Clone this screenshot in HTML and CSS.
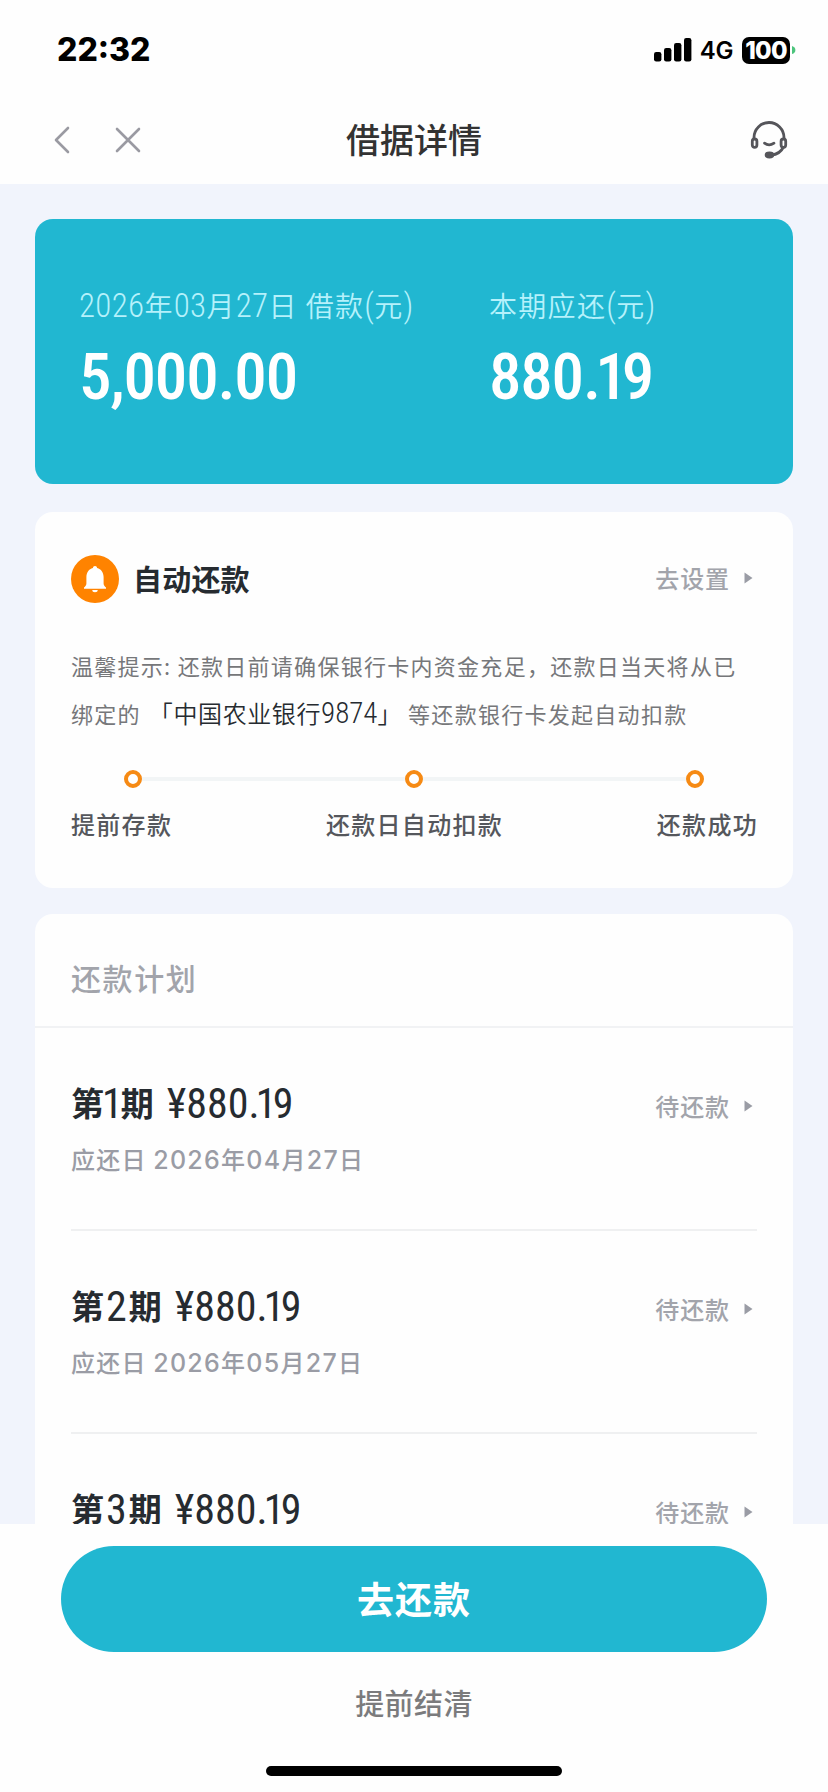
FILE: index.html
```html
<!DOCTYPE html>
<html lang="zh-CN">
<head>
<meta charset="utf-8">
<title>借据详情</title>
<link rel="stylesheet" href="styles.css">
</head>
<body>
<div class="page">
  <header class="top">
    <div class="status">
      <span class="time">22:32</span>
      <div class="status-right">
        <svg class="signal" width="38" height="24" viewBox="0 0 38 24"><rect x="0" y="14" width="7.4" height="9.5" rx="2.2"/><rect x="10" y="10" width="7.4" height="13.5" rx="2.2"/><rect x="20" y="5" width="7.4" height="18.5" rx="2.2"/><rect x="30" y="0" width="7.4" height="23.5" rx="2.2"/></svg>
        <span class="net">4G</span>
        <span class="battery">100</span>
        <svg class="cap" width="4" height="8" viewBox="0 0 4 8"><path d="M0 0Q3.4 1 3.4 4T0 8Z"/></svg>
      </div>
    </div>
    <nav class="nav">
      <div class="nav-left">
        <svg width="18" height="28" viewBox="0 0 18 28"><path d="M15 2 3 14 15 26"/></svg>
        <svg width="26" height="26" viewBox="0 0 26 26"><path d="M2 2 24 24M24 2 2 24"/></svg>
      </div>
      <h1 class="nav-title">借据详情</h1>
      <svg class="service" width="38" height="38" viewBox="0 0 38 38"><path d="M4 18v-1.5a15 15 0 0 1 30 0V18"/><rect x="2.3" y="18" width="4.6" height="8.4" rx="2.3"/><rect x="31.1" y="18" width="4.6" height="8.4" rx="2.3"/><path d="M33.500 26c-2.500 5-7 7.600-12 8"/><path d="M14.500 22.200q4.500 3.400 9.500 0" stroke-linecap="round"/><ellipse cx="19.500" cy="34" rx="3.400" ry="2" fill="#55555a"/></svg>
    </nav>
  </header>

  <main class="content">
    <section class="summary">
      <div class="summary-main">
        <div class="label"><b class="n">2026</b>年<b class="n">03</b>月<b class="n">27</b>日<i class="gap"></i>借款<b class="n">(</b>元<b class="n">)</b></div>
        <div class="amount">5,000.00</div>
      </div>
      <div>
        <div class="label">本期应还<b class="n">(</b>元<b class="n">)</b></div>
        <div class="amount tight">880<span class="frac">.19</span></div>
      </div>
    </section>

    <section class="card auto">
      <div class="auto-head">
        <svg class="bell" width="48" height="48" viewBox="0 0 48 48"><circle cx="24" cy="24" r="24" fill="#ff8300"/><path d="M24 11c1.200 0 2 .8 2.100 1.900 4 1 6.500 4.500 6.500 9.100v6.500c0 1.800 1.200 2.800 2.400 4.100v1.200H13v-1.200c1.200-1.300 2.400-2.300 2.400-4.100V22c0-4.600 2.500-8.100 6.500-9.100.1-1.100.9-1.900 2.100-1.900ZM21.300 35h5.400a2.700 2.200 0 0 1-5.400 0Z" fill="#fff"/></svg>
        <h2 class="auto-title">自动还款</h2>
        <a class="more">去设置<svg width="9" height="12" viewBox="0 0 9 12"><path d="M.5.500 8.500 6 .5 11.500Z"/></svg></a>
      </div>
      <p class="tip">温馨提示: 还款日前请确保银行卡内资金充足，还款日当天将从已<br>绑定的<span class="bank">「中国农业银行<b class="bank-n">9874</b>」</span>等还款银行卡发起自动扣款</p>
      <div class="track"><i class="dot"></i><i class="bar"></i><i class="dot"></i><i class="bar"></i><i class="dot"></i></div>
      <div class="steps"><span>提前存款</span><span>还款日自动扣款</span><span>还款成功</span></div>
    </section>

    <section class="card plan">
      <h2 class="plan-title">还款计划</h2>
      <div class="row">
        <div>
          <div class="term">第<b class="d first">1</b>期<span class="money">¥880<span class="frac">.19</span></span></div>
          <div class="due">应还日 <b class="dn">2026</b>年<b class="dn">04</b>月<b class="dn">27</b>日</div>
        </div>
        <a class="more">待还款<svg width="9" height="12" viewBox="0 0 9 12"><path d="M.5.500 8.500 6 .5 11.500Z"/></svg></a>
      </div>
      <div class="row">
        <div>
          <div class="term">第<b class="d">2</b>期<span class="money">¥880<span class="frac">.19</span></span></div>
          <div class="due">应还日 <b class="dn">2026</b>年<b class="dn">05</b>月<b class="dn">27</b>日</div>
        </div>
        <a class="more">待还款<svg width="9" height="12" viewBox="0 0 9 12"><path d="M.5.500 8.500 6 .5 11.500Z"/></svg></a>
      </div>
      <div class="row">
        <div>
          <div class="term">第<b class="d">3</b>期<span class="money">¥880<span class="frac">.19</span></span></div>
        </div>
        <a class="more">待还款<svg width="9" height="12" viewBox="0 0 9 12"><path d="M.5.500 8.500 6 .5 11.500Z"/></svg></a>
      </div>
    </section>
  </main>

  <footer class="footer">
    <button class="pay">去还款</button>
    <a class="settle">提前结清</a>
    <div class="home"></div>
  </footer>
</div>
</body>
</html>
```
FILE: styles.css
```css
* { box-sizing: border-box; margin: 0; padding: 0; }
body { background: #fefefe; font-family: "Noto Sans CJK SC", sans-serif; }
b, i, h1, h2 { font-style: normal; }
.page { width: 828px; height: 1792px; display: flex; flex-direction: column; overflow: hidden; background: #fefefe; }

.top { flex: none; height: 184px; }
.status { height: 100px; padding: 0 32px 0 57px; display: flex; justify-content: space-between; align-items: center; font-family: Inter, sans-serif; color: #000; }
.time { font-size: 32px; font-weight: 760; line-height: 40px; }
.status-right { display: flex; align-items: center; }
.net { font-size: 24px; font-weight: 600; line-height: 30px; padding-top: 1px; margin-left: 8px; letter-spacing: -.4px; }
.battery { margin-left: 9px; width: 48px; height: 27px; border-radius: 7px; background: #000; color: #fff; font-size: 24px; font-weight: 800; line-height: 27px; text-align: center; letter-spacing: -.8px; }
.cap { margin-left: 2px; fill: #4cc47c; }
.nav { height: 78px; padding: 0 40px; display: grid; grid-template-columns: 1fr auto 1fr; align-items: center; }
.nav-left { display: flex; align-items: center; gap: 44px; margin: 2px 0 0 13px; }
.nav-left svg { fill: none; stroke: #9a9aa2; stroke-width: 2.6; stroke-linecap: round; stroke-linejoin: round; }
.nav-title { font-size: 34px; font-weight: 500; line-height: 50px; color: #333; }
.service { justify-self: end; margin-top: 2px; fill: none; stroke: #55555a; stroke-width: 2.8; }

.content { flex: 1; min-height: 0; overflow: hidden; background: #f1f4fc; padding: 35px 35px 0; display: flex; flex-direction: column; }
.summary { flex: none; height: 265px; border-radius: 18px; background: #21b7d1; padding: 61px 0 0 44px; display: flex; margin-bottom: 28px; }
.summary-main { width: 410px; }
.label { height: 50px; line-height: 50px; font-size: 28px; font-weight: 350; letter-spacing: 1.3px; color: #b5f1fb; white-space: nowrap; }
.n { font-family: Roboto, sans-serif; font-stretch: 79%; font-size: 33px; font-weight: 330; letter-spacing: .3px; line-height: 0; }
.gap { display: inline-block; width: 8px; }
.amount { height: 70px; line-height: 70px; font-family: Roboto, sans-serif; font-stretch: 75%; font-size: 65px; font-weight: 530; letter-spacing: -1.2px; color: #fff; margin-top: 12px; }
.frac { letter-spacing: -.09em; }

.card { flex: none; border-radius: 18px; background: #fefefe; }
.auto { height: 376px; padding: 43px 36px 0; margin-bottom: 26px; }
.auto-head { height: 48px; display: flex; align-items: center; }
.auto-title { margin-left: 14px; font-size: 29px; font-weight: 700; letter-spacing: .2px; color: #262b30; flex: 1; line-height: 46px; height: 48px; }
.more { font-size: 24px; font-weight: 500; letter-spacing: .9px; color: #a2a4ab; display: flex; align-items: center; line-height: 34px; height: 36px; }
.auto .more { height: 38px; padding-bottom: 3px; }
.more svg { margin: 0 4px 0 14px; fill: #9a9ca5; }
.tip { margin-top: 38px; font-size: 22px; line-height: 48px; letter-spacing: 1.28px; color: #76777a; white-space: nowrap; }
.bank { margin: 0 6px 0 8px; color: #262b30; font-weight: 350; font-size: 24px; letter-spacing: .6px; line-height: 0; }
.bank-n { font-family: Roboto, sans-serif; font-stretch: 77%; font-size: 29px; font-weight: 350; letter-spacing: 0; line-height: 0; }
.track { margin: 33px 53px 0; height: 18px; display: flex; align-items: center; }
.dot { width: 18px; height: 18px; border: 4px solid #f68a14; border-radius: 50%; }
.bar { flex: 1; height: 4px; background: #f2f5f6; }
.steps { margin: 19px -1px 0 0; display: flex; justify-content: space-between; font-size: 24px; font-weight: 500; letter-spacing: 1.3px; line-height: 34px; color: #55575c; }

.plan { height: 612px; border-radius: 18px 18px 0 0; }
.plan-title { height: 114px; padding: 0 36px; border-bottom: 2px solid #f1f2f4; font-size: 30px; font-weight: 500; letter-spacing: 1.6px; line-height: 126px; color: #a2a4ab; }
.row { height: 203px; margin: 0 36px; border-bottom: 2px solid #eff0f1; display: flex; justify-content: space-between; padding-top: 47px; }
.row:last-child { height: 110px; border: 0; }
.row .more { margin-top: 13px; }
.term { height: 56px; line-height: 54px; font-size: 33px; font-weight: 700; color: #262b30; display: flex; }
.d { margin: 0 2px; font-weight: 450; font-family: Roboto, sans-serif; font-stretch: 77%; font-size: 42px; line-height: 58px; }
.first { margin: 0 -2px; }
.money { margin-left: 13px; font-family: Roboto, sans-serif; font-stretch: 77%; font-size: 42px; font-weight: 450; line-height: 58px; }
.due { line-height: 34px; height: 36px; margin-top: 11px; font-size: 24px; font-weight: 450; letter-spacing: 1.2px; color: #9a9ca5; }
.dn { font-family: Inter, sans-serif; font-size: 25px; font-weight: 480; letter-spacing: 1.3px; line-height: 0; }

.footer { flex: none; height: 268px; padding-top: 22px; background: #fefefe; display: flex; flex-direction: column; align-items: center; }
.pay { width: 706px; height: 106px; border: 0; border-radius: 53px; background: #21b7d1; color: #fff; font: 700 37px/102px "Noto Sans CJK SC", sans-serif; letter-spacing: 1px; padding-bottom: 3px; }
.settle { margin-top: 29px; font-size: 29px; font-weight: 500; line-height: 42px; letter-spacing: .4px; color: #7b7b7d; }
.home { margin-top: 43px; width: 296px; height: 10px; border-radius: 5px; background: #000; }
```
